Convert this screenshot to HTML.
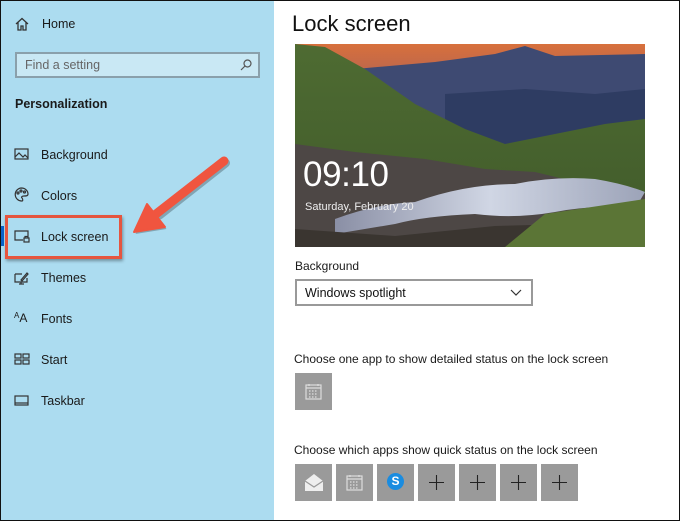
<!DOCTYPE html>
<html><head><meta charset="utf-8"><style>
*{margin:0;padding:0;box-sizing:border-box}
body{width:680px;height:521px;overflow:hidden;font-family:"Liberation Sans",sans-serif;background:#fff;position:relative}
.frame{position:absolute;left:0;top:0;width:680px;height:521px;border:1px solid #111;pointer-events:none;z-index:10}
.side{position:absolute;left:0;top:0;width:274px;height:521px;background:#acdcf0}
.t{position:absolute;font-size:12.5px;color:#1a1a1a}
.ic{position:absolute}
.search{position:absolute;left:15px;top:52px;width:245px;height:26px;border:2px solid #8aa0ab;background:#c9e8f4}
.search span{position:absolute;left:8px;top:4px;font-size:12.5px;color:#666}
.tile{position:absolute;width:37px;height:37px;background:#9a9a9a}
.plus svg{position:absolute;left:11px;top:11px}
</style></head><body>
<div class="side"></div>
<div style="position:absolute;left:1px;top:226px;width:3px;height:20px;background:#0a63c9"></div>

<svg class="ic" style="left:15px;top:17px" width="14" height="14" viewBox="0 0 14 14" fill="none" stroke="#333" stroke-width="1.3"><path d="M1 7L7 1.5 13 7M3 5.5V13H6V9H8V13H11V5.5"/></svg>
<div class="t" style="left:42px;top:17px">Home</div>
<div class="search"><span>Find a setting</span>
<svg style="position:absolute;right:6px;top:5px" width="12" height="12" viewBox="0 0 12 12" fill="none" stroke="#555" stroke-width="1.2"><circle cx="7.5" cy="4.5" r="3.5"/><path d="M5 7L1 11"/></svg></div>
<div class="t" style="left:15px;top:97px;font-weight:bold">Personalization</div>

<svg class="ic" style="left:14px;top:148px" width="15" height="13" viewBox="0 0 15 13" fill="none" stroke="#333" stroke-width="1.2"><rect x="1" y="1" width="13" height="10"/><path d="M1 9L5 5 9 9 11 7 14 10"/></svg>
<div class="t" style="left:41px;top:148px">Background</div>
<svg class="ic" style="left:14px;top:187px" width="15" height="15" viewBox="0 0 15 15" fill="none" stroke="#333" stroke-width="1.2"><path d="M7.5 1A6.5 6.5 0 1 0 8 14C9 14 9 12 8 11S8 9 10 9 14 9 14 7A6.5 6 0 0 0 7.5 1Z"/><circle cx="4" cy="6" r="1"/><circle cx="7" cy="4" r="1"/><circle cx="10.5" cy="5" r="1"/></svg>
<div class="t" style="left:41px;top:189px">Colors</div>
<svg class="ic" style="left:14px;top:230px" width="16" height="13" viewBox="0 0 16 13" fill="none" stroke="#333" stroke-width="1.2"><path d="M9 10H1V1H14V6"/><rect x="10" y="8" width="5" height="4"/><path d="M11 8V6.5H14V8"/></svg>
<div class="t" style="left:41px;top:230px">Lock screen</div>
<div style="position:absolute;left:5px;top:215px;width:117px;height:44px;border:3px solid #e5553f;box-shadow:1px 2px 3px rgba(0,0,0,.35)"></div>

<svg class="ic" style="left:14px;top:271px" width="15" height="14" viewBox="0 0 15 14" fill="none" stroke="#333" stroke-width="1.2"><path d="M1 3H8M1 3V11H13V7M5 13H10M7 11V13"/><path d="M7 9L13 2 14 3 8 10Z"/></svg>
<div class="t" style="left:41px;top:271px">Themes</div>
<div class="t" style="left:14px;top:311px;font-size:12px"><span style="font-size:8px;vertical-align:4px">A</span>A</div>
<div class="t" style="left:41px;top:312px">Fonts</div>
<svg class="ic" style="left:14px;top:353px" width="16" height="12" viewBox="0 0 16 12" fill="none" stroke="#333" stroke-width="1.2"><rect x="1" y="1" width="6" height="4"/><rect x="9" y="1" width="6" height="4"/><rect x="1" y="7" width="6" height="4"/><rect x="9" y="7" width="6" height="4"/></svg>
<div class="t" style="left:41px;top:353px">Start</div>
<svg class="ic" style="left:14px;top:395px" width="15" height="11" viewBox="0 0 15 11" fill="none" stroke="#333" stroke-width="1.2"><rect x="1" y="1" width="13" height="9"/><path d="M1 8H14"/></svg>
<div class="t" style="left:41px;top:394px">Taskbar</div>

<svg style="position:absolute;left:120px;top:150px" width="120" height="100">
<path d="M104 11L38 63" stroke="rgba(0,0,0,.25)" stroke-width="9" stroke-linecap="round" transform="translate(1.5,2)"/>
<path d="M14 82L27 55 45 77Z" fill="rgba(0,0,0,.25)" transform="translate(1.5,2)"/>
<path d="M104 11L36 64" stroke="#f0553f" stroke-width="9" stroke-linecap="round"/>
<path d="M14 82L27 54 45 77Z" fill="#f0553f" stroke="#f0553f" stroke-width="2" stroke-linejoin="round"/>
</svg>

<div style="position:absolute;left:292px;top:11px;font-size:22px;color:#111">Lock screen</div>

<svg style="position:absolute;left:295px;top:44px" width="350" height="203" viewBox="0 0 350 203">
<defs>
<linearGradient id="sky" x1="0" y1="0" x2="0" y2="1"><stop offset="0" stop-color="#d8703c"/><stop offset=".12" stop-color="#c0684a"/><stop offset=".35" stop-color="#45507a"/><stop offset="1" stop-color="#2c3a5e"/></linearGradient>
<linearGradient id="g" x1="0" y1="0" x2="0" y2="1"><stop offset="0" stop-color="#4e6b32"/><stop offset="1" stop-color="#405a2a"/></linearGradient>
<linearGradient id="w" x1="0" y1="0" x2="1" y2="0"><stop offset="0" stop-color="#8a8fa5"/><stop offset=".5" stop-color="#d0d6e4"/><stop offset="1" stop-color="#9ca3b8"/></linearGradient>
</defs>
<rect width="350" height="203" fill="url(#sky)"/>
<path d="M60 25L140 18 200 10 230 2 260 12 350 10V95H60Z" fill="#3e4a72"/>
<path d="M150 50L230 45 300 50 350 45V110H150Z" fill="#2e3c62"/>
<path d="M0 0L30 3 70 25 120 60 170 85 210 100 260 90 310 80 350 75V203H0Z" fill="url(#g)"/>
<path d="M0 100L60 108 130 115 190 125 240 128 290 140 350 150V203H0Z" fill="#4d4745"/>
<path d="M40 175Q80 160 120 158 170 140 220 140 260 132 300 135 330 140 350 148L340 165Q300 160 260 168 220 175 180 170 130 172 100 180 70 185 40 190Z" fill="url(#w)"/>
<path d="M0 185L100 192 200 182 350 178V203H0Z" fill="#3a3530"/>
<path d="M250 170L350 155V203H210Z" fill="#5b7536"/>
<text x="8" y="142" font-family="Liberation Sans" font-size="35" fill="#fff" textLength="86">09:10</text>
<text x="10" y="166" font-family="Liberation Sans" font-size="11" fill="#eee">Saturday, February 20</text>
</svg>

<div class="t" style="left:295px;top:259px;font-size:12px">Background</div>
<div style="position:absolute;left:295px;top:279px;width:238px;height:27px;border:2px solid #999;background:#fff">
<span style="position:absolute;left:8px;top:5px;font-size:12.5px;color:#111">Windows spotlight</span>
<svg style="position:absolute;right:9px;top:8px" width="12" height="7" viewBox="0 0 12 7" fill="none" stroke="#333" stroke-width="1.2"><path d="M1 1L6 6 11 1"/></svg></div>

<div class="t" style="left:294px;top:352px;font-size:12px">Choose one app to show detailed status on the lock screen</div>
<div class="tile" style="left:295px;top:373px">
<svg style="position:absolute;left:10px;top:10px" width="17" height="17" viewBox="0 0 17 17" fill="none" stroke="#ddd" stroke-width="1.2"><rect x="1" y="2" width="15" height="14"/><path d="M4 1V3M13 1V3M1 5H16"/><path d="M4 8H13M4 11H13M4 14H13" stroke-dasharray="1.5 1.5"/></svg></div>

<div class="t" style="left:294px;top:443px;font-size:12px">Choose which apps show quick status on the lock screen</div>
<div class="tile" style="left:295px;top:464px">
<svg style="position:absolute;left:9px;top:9px" width="20" height="19" viewBox="0 0 20 19" fill="#eee"><path d="M1 8L10 1 19 8V18H1Z"/><path d="M1 8L10 14 19 8" fill="none" stroke="#9a9a9a" stroke-width="1.2"/></svg></div>
<div class="tile" style="left:336px;top:464px">
<svg style="position:absolute;left:10px;top:10px" width="17" height="17" viewBox="0 0 17 17" fill="none" stroke="#ddd" stroke-width="1.2"><rect x="1" y="2" width="15" height="14"/><path d="M4 1V3M13 1V3M1 5H16"/><path d="M4 8H13M4 11H13M4 14H13" stroke-dasharray="1.5 1.5"/></svg></div>
<div class="tile" style="left:377px;top:464px"><div style="position:absolute;left:10px;top:9px;width:17px;height:17px;border-radius:50%;background:#1a8ce0;color:#fff;font-weight:bold;font-size:12px;text-align:center;line-height:17px">S</div></div>
<div class="tile plus" style="left:418px;top:464px"><svg width="15" height="15" stroke="#222" stroke-width="1.1"><path d="M7.5 0V15M0 7.5H15"/></svg></div>
<div class="tile plus" style="left:459px;top:464px"><svg width="15" height="15" stroke="#222" stroke-width="1.1"><path d="M7.5 0V15M0 7.5H15"/></svg></div>
<div class="tile plus" style="left:500px;top:464px"><svg width="15" height="15" stroke="#222" stroke-width="1.1"><path d="M7.5 0V15M0 7.5H15"/></svg></div>
<div class="tile plus" style="left:541px;top:464px"><svg width="15" height="15" stroke="#222" stroke-width="1.1"><path d="M7.5 0V15M0 7.5H15"/></svg></div>
<div class="frame"></div>
</body></html>
